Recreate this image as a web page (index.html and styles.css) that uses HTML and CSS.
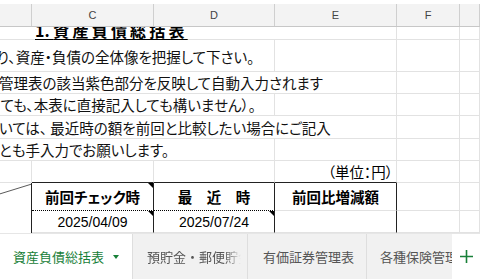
FILE: index.html
```html
<!DOCTYPE html>
<html lang="ja">
<head>
    <meta charset="UTF-8">
    <meta name="viewport" content="width=device-width, initial-scale=1.0">
    <title>資産負債総括表</title>
    <link rel="stylesheet" href="styles.css">
</head>
<body>
    <div class="topgap"></div>

    <div class="colhead">
        <div class="ch"></div>
        <div class="ch">C</div>
        <div class="ch">D</div>
        <div class="ch">E</div>
        <div class="ch">F</div>
        <div class="ch"></div>
    </div>

    <div class="sheet">
        <!-- title -->
        <div class="cell title span4"><span class="title-text">1.&nbsp;<span class="spaced">資産負債総括表</span></span></div>
        <div class="cell"></div>
        <div class="cell"></div>

        <!-- notes -->
        <div class="cell note span3"><span class="shift-3">り、資産・負債の全体像を把握して下さい。</span></div>
        <div class="cell"></div>
        <div class="cell"></div>
        <div class="cell"></div>

        <div class="cell note span4"><span class="shift-1">管理表の該当紫色部分を反映して自動入力されます</span></div>
        <div class="cell"></div>
        <div class="cell"></div>

        <div class="cell note span3"><span class="shift-9">くても、本表に直接記入しても構いません）。</span></div>
        <div class="cell"></div>
        <div class="cell"></div>
        <div class="cell"></div>

        <div class="cell note span4"><span class="shift-1">いては、 最近時の額を前回と比較したい場合にご記入</span></div>
        <div class="cell"></div>
        <div class="cell"></div>

        <div class="cell note span3"><span class="shift-1">とも手入力でお願いします。</span></div>
        <div class="cell"></div>
        <div class="cell"></div>
        <div class="cell"></div>

        <!-- unit row -->
        <div class="cell"></div>
        <div class="cell tb-top"></div>
        <div class="cell tb-top"></div>
        <div class="cell tb-top unit">（単位：円）</div>
        <div class="cell"></div>
        <div class="cell"></div>

        <!-- table head -->
        <div class="cell diag">
            <svg width="32" height="50" viewBox="0 0 32 50"><line x1="32" y1="0.5" x2="-128" y2="50" stroke="#555" stroke-width="1"/></svg>
        </div>
        <div class="cell th dotted mark">前回チェック時</div>
        <div class="cell th dotted">最　近　時</div>
        <div class="cell th">前回比増減額</div>
        <div class="cell"></div>
        <div class="cell"></div>

        <!-- dates -->
        <div class="cell td mark">2025/04/09</div>
        <div class="cell td mark">2025/07/24</div>
        <div class="cell td"></div>
        <div class="cell"></div>
        <div class="cell"></div>
    </div>

    <div class="tabs">
        <div class="tab active">資産負債総括表<span class="caret"></span></div>
        <div class="tab t2"><span class="fade">預貯金・郵便貯金</span></div>
        <div class="tab t3">有価証券管理表</div>
        <div class="tab t4"><span>各種保険管理表</span></div>
        <div class="add">
            <svg width="13" height="13" viewBox="0 0 13 13"><path d="M6.5 0v13M0 6.5h13" stroke="#188038" stroke-width="1.6"/></svg>
        </div>
    </div>
</body>
</html>
```

FILE: styles.css
```css
* { box-sizing: border-box; }

body {
    margin: 0;
    width: 480px;
    height: 279px;
    overflow: hidden;
    background: #fff;
    color: #000;
    font-family: "Noto Sans CJK JP", sans-serif;
}

.topgap { height: 4px; }

.colhead {
    display: grid;
    grid-template-columns: 32px 122px 121px 122px 63px 20px;
    height: 23px;
    background: #f3f3f3;
    border-bottom: 1px solid #c7c7c7;
}
.ch {
    display: flex;
    align-items: center;
    justify-content: center;
    border-right: 1px solid #cfcfcf;
    font: 11px "Liberation Sans", Arial, sans-serif;
    color: #444;
}

.sheet {
    display: grid;
    grid-template-columns: 32px 122px 121px 122px 63px 20px;
    grid-template-rows: 13px 32px 22px 22px 23px 22px 22px 28px 22px;
    height: 206px;
    overflow: hidden;
    font-feature-settings: "palt";
}
.cell {
    display: flex;
    align-items: center;
    min-width: 0;
    white-space: nowrap;
    font-size: 14.5px;
    border-right: 1px solid #e2e2e2;
    border-bottom: 1px solid #e2e2e2;
}
.span3 { grid-column: span 3; }
.span4 { grid-column: span 4; }

.note { color: #111; }
.note:nth-child(4) { padding-top: 2px; }

.title { align-items: flex-end; padding-left: 35px; }
.title-text {
    font-size: 16px;
    line-height: 16px;
    font-weight: bold;
    text-decoration: underline;
    text-underline-offset: 2px;
    margin-bottom: 1px;
}
.spaced { letter-spacing: 3.2px; }

.shift-1 { margin-left: -1px; }
.shift-3 { margin-left: -3px; }
.shift-9 { margin-left: -9px; }

.tb-top { border-bottom-color: #222; }
.unit { justify-content: flex-end; padding-right: 3px; }

.diag { grid-row: span 2; border-right-color: #222; border-bottom: none; align-items: flex-start; overflow: hidden; }
.th {
    position: relative;
    justify-content: center;
    font-size: 14.5px;
    font-weight: bold;
    border-right-color: #222;
}
.th.dotted { border-bottom: 1px dotted #000; }
.td {
    position: relative;
    justify-content: center;
    font: 14px "Liberation Sans", Arial, sans-serif;
    border-right-color: #222;
}
.mark::after {
    content: "";
    position: absolute;
    top: 0;
    right: 0;
    border-top: 5px solid #000;
    border-left: 5px solid transparent;
}

.tabs {
    display: flex;
    height: 46px;
    background: #f1f1f1;
    border-top: 1px solid #e6e6e6;
}
.tab {
    display: flex;
    align-items: center;
    overflow: hidden;
    white-space: nowrap;
    font-size: 13px;
    color: #555;
    padding-left: 14px;
    border-right: 1px solid #dedede;
}
.tab.active { width: 133px; padding-left: 13px; background: #fff; color: #188038; }
.caret {
    margin-left: 9px;
    border-top: 4px solid #188038;
    border-left: 3.5px solid transparent;
    border-right: 3.5px solid transparent;
}
.tab.t2 { width: 115px; }
.fade {
    -webkit-mask-image: linear-gradient(to right, #000 78px, transparent 94px);
    mask-image: linear-gradient(to right, #000 78px, transparent 94px);
}
.tab.t3 { width: 119px; padding-left: 15px; }
.tab.t4 { width: 85px; padding-left: 13px; border-right: none; }
.add {
    flex: 1;
    display: flex;
    align-items: center;
    justify-content: center;
    background: #fff;
}
```
